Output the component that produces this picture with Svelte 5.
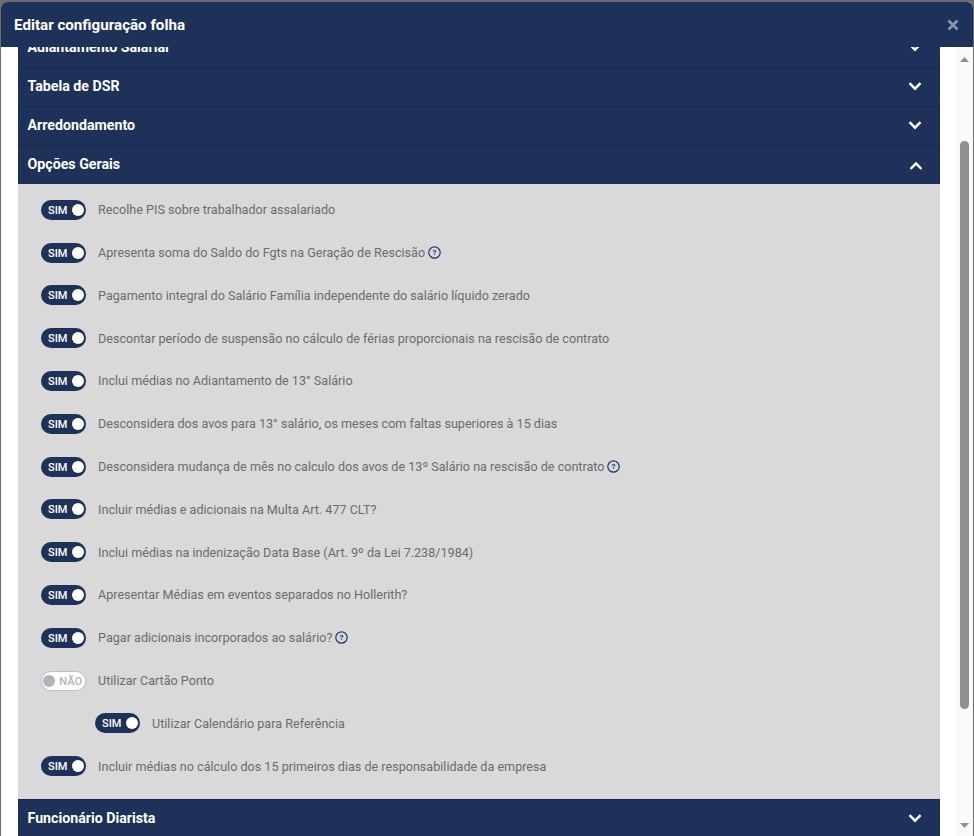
<script>
  import { onMount } from 'svelte';

  const topRows = ['Adiantamento Salarial', 'Tabela de DSR', 'Arredondamento'];

  const options = [
    { text: 'Recolhe PIS sobre trabalhador assalariado', on: true },
    { text: 'Apresenta soma do Saldo do Fgts na Geração de Rescisão', on: true, help: true },
    { text: 'Pagamento integral do Salário Família independente do salário líquido zerado', on: true },
    { text: 'Descontar período de suspensão no cálculo de férias proporcionais na rescisão de contrato', on: true },
    { text: 'Inclui médias no Adiantamento de 13° Salário', on: true },
    { text: 'Desconsidera dos avos para 13° salário, os meses com faltas superiores à 15 dias', on: true },
    { text: 'Desconsidera mudança de mês no calculo dos avos de 13º Salário na rescisão de contrato', on: true, help: true },
    { text: 'Incluir médias e adicionais na Multa Art. 477 CLT?', on: true },
    { text: 'Inclui médias na indenização Data Base (Art. 9º da Lei 7.238/1984)', on: true },
    { text: 'Apresentar Médias em eventos separados no Hollerith?', on: true },
    { text: 'Pagar adicionais incorporados ao salário?', on: true, help: true },
    { text: 'Utilizar Cartão Ponto', on: false },
    { text: 'Utilizar Calendário para Referência', on: true, nested: true },
    { text: 'Incluir médias no cálculo dos 15 primeiros dias de responsabilidade da empresa', on: true }
  ];

  let body;

  // a tela de referência está rolada um pouco para baixo
  onMount(() => {
    body.scrollTop = 107;
  });
</script>

<div class="page">
  <div class="modal">
    <header class="modal-head">
      <h1>Editar configuração folha</h1>
      <button class="close" type="button" aria-label="Fechar">
        <svg width="12" height="12" viewBox="0 0 12 12" fill="none" stroke="currentColor" stroke-width="2.6"><path d="M1.5 1.5l9 9M10.5 1.5l-9 9" /></svg>
      </button>
    </header>

    <div class="modal-main">
      <div class="modal-body" bind:this={body}>
        <div class="sections">
          {#each topRows as title}
            <div class="section-row">
              <span>{title}</span>
              <svg class="chev" width="14" height="10" viewBox="0 0 14 10" fill="none" stroke="currentColor" stroke-width="2.4"><path d="M1.5 2.2L7 7.7l5.5-5.5" /></svg>
            </div>
          {/each}

          <div class="section-row">
            <span>Opções Gerais</span>
            <svg class="chev up" width="14" height="10" viewBox="0 0 14 10" fill="none" stroke="currentColor" stroke-width="2.4"><path d="M1.5 8L7 2.5 12.5 8" /></svg>
          </div>

          <div class="options">
            {#each options as opt}
              <div class="option" class:nested={opt.nested}>
                {#if opt.on}
                  <span class="toggle on"><b>SIM</b><i></i></span>
                {:else}
                  <span class="toggle off"><i></i><b>NÃO</b></span>
                {/if}
                <span class="label">{opt.text}</span>
                {#if opt.help}
                  <svg class="help" width="13" height="13" viewBox="0 0 13 13" fill="none">
                    <circle cx="6.5" cy="6.5" r="5.7" stroke="#1e3a6e" stroke-width="1.2" />
                    <text x="6.5" y="9.3" text-anchor="middle" font-size="8" font-weight="700" fill="#1e3a6e">?</text>
                  </svg>
                {/if}
              </div>
            {/each}
          </div>

          <div class="section-row">
            <span>Funcionário Diarista</span>
            <svg class="chev" width="14" height="10" viewBox="0 0 14 10" fill="none" stroke="currentColor" stroke-width="2.4"><path d="M1.5 2.2L7 7.7l5.5-5.5" /></svg>
          </div>
        </div>
      </div>

      <!-- o navegador headless esconde a barra nativa, então ela é desenhada aqui -->
      <div class="scrollbar">
        <svg width="9" height="5" viewBox="0 0 9 5"><path d="M4.5 0L9 5H0z" fill="#909090" /></svg>
        <span class="thumb"></span>
        <svg class="arrow-down" width="9" height="5" viewBox="0 0 9 5"><path d="M0 0H9L4.5 5z" fill="#909090" /></svg>
      </div>
    </div>
  </div>
</div>

<style>
  :global(body) {
    margin: 0;
    background: #6d6d6d;
  }
  .page {
    height: 836px;
    overflow: hidden;
    padding: 2px 1px 0 1px;
    box-sizing: border-box;
    font-family: Roboto, "Liberation Sans", sans-serif;
  }
  .modal {
    height: 834px;
    display: flex;
    flex-direction: column;
    background: #fff;
    border-radius: 6px 6px 0 0;
    overflow: hidden;
  }
  .modal-head {
    flex: 0 0 45px;
    display: flex;
    align-items: center;
    justify-content: space-between;
    padding: 0 14px 0 13px;
    background: #1e3158;
  }
  h1 {
    margin: 0;
    font-size: 15.15px;
    font-weight: 700;
    color: #fff;
  }
  .close {
    display: flex;
    padding: 0;
    border: 0;
    background: none;
    color: #8d97aa;
    cursor: pointer;
  }

  .modal-main {
    flex: 1;
    min-height: 0;
    display: flex;
  }
  .modal-body {
    flex: 1;
    min-width: 0;
    overflow: hidden;
  }
  .scrollbar {
    flex: 0 0 17px;
    display: flex;
    flex-direction: column;
    align-items: center;
    padding: 10px 0 8px;
    box-sizing: border-box;
    background: #fafafa;
  }
  .thumb {
    width: 9px;
    height: 568px;
    margin-top: 79px;
    border-radius: 5px;
    background: #8f8f8f;
  }
  .arrow-down {
    margin-top: auto;
  }

  /* as seções acima e abaixo da área visível ficam só como espaço de rolagem */
  .sections {
    padding: 88px 16px 151px 17px;
  }
  .section-row {
    height: 39px;
    box-sizing: border-box;
    display: flex;
    align-items: center;
    justify-content: space-between;
    padding: 0 18px 2px 9.5px;
    background: #1e3158;
    border-top: 1px solid #18284a;
    color: #fff;
    font-size: 14.2px;
    font-weight: 700;
  }
  .chev {
    display: block;
  }
  .chev.up {
    margin: 4px -1px 0 0;
  }

  .options {
    padding: 4.4px 23px 11.4px;
    background: #d9d9d9;
  }
  .option {
    height: 42.8px;
    display: flex;
    align-items: center;
  }
  .option.nested {
    padding-left: 54px;
  }
  .label {
    margin-left: 12px;
    font-size: 12.6px;
    color: #6c6c6c;
  }
  .help {
    margin-left: 2.5px;
  }

  .toggle {
    flex: 0 0 45px;
    height: 20px;
    box-sizing: border-box;
    display: flex;
    align-items: center;
    justify-content: space-between;
    border-radius: 10px;
    padding: 0 2px 0 7px;
  }
  .toggle b {
    padding-top: 1px;
    font-size: 11px;
    font-weight: 500;
  }
  .toggle i {
    width: 12px;
    height: 12px;
    border-radius: 50%;
  }
  .toggle.on {
    background: #1e3158;
    color: #fff;
  }
  .toggle.on i {
    background: #fff;
  }
  .toggle.off {
    padding: 0 3px 0 1px;
    background: #fff;
    border: 1px solid #bcc1c8;
    color: #aeb4bc;
  }
  .toggle.off i {
    background: #aeb4bc;
  }
</style>
